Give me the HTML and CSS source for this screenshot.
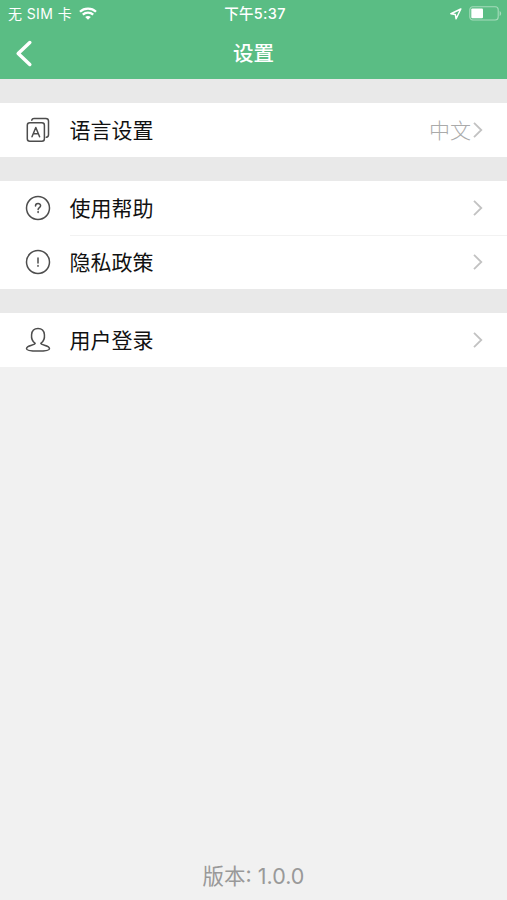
FILE: index.html
```html
<!DOCTYPE html>
<html lang="zh-CN">
<head>
    <meta charset="UTF-8">
    <meta name="viewport" content="width=device-width, initial-scale=1">
    <title>设置</title>
    <link rel="stylesheet" href="styles.css">
</head>
<body>
    <div class="page">
        <header class="header">
            <div class="status-bar">
                <div class="status-left">
                    <span class="carrier">无 SIM 卡</span>
                    <svg class="wifi" width="18" height="13" viewBox="0 0 18 13" fill="none" stroke="#fff" stroke-width="2.3">
                        <path d="M1 4.7C5.3.5 12.7.5 17 4.7"/>
                        <path d="M3.8 7.7c2.9-2.8 7.5-2.8 10.4 0"/>
                        <path d="M9 12.8 6.2 10c1.6-1.5 4-1.5 5.6 0z" fill="#fff" stroke="none"/>
                    </svg>
                </div>
                <span class="time">下午5:37</span>
                <div class="status-right">
                    <svg width="12" height="12" viewBox="0 0 12 12" fill="none" stroke="#fff" stroke-width="1.5" stroke-linejoin="round">
                        <path d="M10.8 1 .9 5.7l4.4.7.8 4.4z"/>
                    </svg>
                    <svg width="33" height="15" viewBox="0 0 33 15">
                        <rect x=".8" y=".8" width="28.4" height="13.2" rx="3" fill="none" stroke="#a5dcbb" stroke-width="1.1"/>
                        <rect x="2.3" y="2.5" width="11.7" height="9.8" rx="1" fill="#fff"/>
                        <path d="M30.6 5v5c2-.8 2-4.2 0-5z" fill="#a5dcbb"/>
                    </svg>
                </div>
            </div>
            <div class="nav-bar">
                <a class="back" href="#">
                    <svg width="18" height="28" viewBox="0 0 18 28" fill="none" stroke="#fff" stroke-width="3.5" stroke-linecap="round" stroke-linejoin="round">
                        <path d="M14.8 2.500 3.200 13.500l11.600 11"/>
                    </svg>
                </a>
                <h1 class="title">设置</h1>
            </div>
        </header>

        <main class="groups">
            <ul class="group">
                <li class="row">
                    <svg class="icon" viewBox="0 0 26 26">
                        <rect x="2.300" y="5.800" width="17.100" height="18.400" rx="2.500"/>
                        <path d="M6.800 3.200V3q.4-1.600 2.200-1.600h11.800q2.700 0 2.700 2.700v13.600q0 2.300-2.200 2.600"/>
                        <path d="m7 19.700 3.800-9.200 3.800 9.200M8.400 16.700h4.800"/>
                    </svg>
                    <div class="cell">
                        <span class="label">语言设置</span>
                        <span class="value">中文</span>
                        <svg class="arrow" viewBox="0 0 10 18"><path d="m1 1.800 7.300 7.200L1 16.200"/></svg>
                    </div>
                </li>
            </ul>
            <ul class="group">
                <li class="row">
                    <svg class="icon" viewBox="0 0 26 26">
                        <circle cx="13" cy="13" r="11.500"/>
                        <path d="M10.500 11c0-3.300 5.100-3.200 5.100-.2 0 1.800-2.500 1.800-2.500 3.600M13.100 16.400v1"/>
                    </svg>
                    <div class="cell">
                        <span class="label">使用帮助</span>
                        <svg class="arrow" viewBox="0 0 10 18"><path d="m1 1.800 7.300 7.200L1 16.200"/></svg>
                    </div>
                </li>
                <li class="row">
                    <svg class="icon" viewBox="0 0 26 26">
                        <circle cx="13" cy="13" r="11.500"/>
                        <path d="M13 9v5M13 16.400v.8"/>
                    </svg>
                    <div class="cell">
                        <span class="label">隐私政策</span>
                        <svg class="arrow" viewBox="0 0 10 18"><path d="m1 1.800 7.300 7.200L1 16.200"/></svg>
                    </div>
                </li>
            </ul>
            <ul class="group">
                <li class="row">
                    <svg class="icon" viewBox="0 0 26 26">
                        <path d="M10.200 16.300C5 13 4.800 1.600 13 1.600S21 13 15.800 16.300c.2 2.200 8.700 1.900 8.700 5.400 0 3.100-23 3.100-23 0 0-3.500 8.500-3.200 8.700-5.400z"/>
                    </svg>
                    <div class="cell">
                        <span class="label">用户登录</span>
                        <svg class="arrow" viewBox="0 0 10 18"><path d="m1 1.800 7.300 7.200L1 16.200"/></svg>
                    </div>
                </li>
            </ul>
        </main>

        <footer class="version">版本: 1.0.0</footer>
    </div>
</body>
</html>
```
FILE: styles.css
```css
* {
    box-sizing: border-box;
    margin: 0;
    padding: 0;
}

body {
    font-family: Inter, "Noto Sans CJK SC", sans-serif;
    background-color: #f1f1f1;
    color: #111;
}

.page {
    display: flex;
    flex-direction: column;
    height: 100vh;
}

.header {
    height: 79px;
    background-color: #5abd84;
    color: #fff;
}

.status-bar {
    display: grid;
    grid-template-columns: 1fr auto 1fr;
    align-items: center;
    height: 27px;
    padding: 0 5px 0 8px;
    font-size: 14px;
    line-height: 27px;
}

.status-left,
.status-right {
    display: flex;
    align-items: center;
    gap: 7px;
}

.status-right {
    justify-content: flex-end;
}

.carrier {
    letter-spacing: 0.4px;
}

.time {
    font-size: 14.5px;
    font-weight: 500;
    letter-spacing: 0.3px;
}

.nav-bar {
    display: grid;
    grid-template-columns: 1fr auto 1fr;
    align-items: center;
    height: 52px;
    padding: 0 15px;
}

.back {
    display: flex;
}

.title {
    font-size: 20.5px;
    font-weight: 500;
    line-height: 52px;
    padding-top: 1px;
}

.groups {
    display: flex;
    flex-direction: column;
    gap: 24px;
    padding-top: 24px;
    background-color: #e9e9e9;
}

.group {
    list-style: none;
    background-color: #fff;
}

.row {
    display: flex;
    align-items: center;
    height: 54px;
    padding-left: 25px;
}

.icon {
    width: 26px;
    height: 26px;
    margin-right: 18.5px;
    fill: none;
    stroke: #4d4d4d;
    stroke-width: 1.5;
    stroke-linecap: round;
    stroke-linejoin: round;
}

.cell {
    display: flex;
    align-items: center;
    flex: 1;
    height: 54px;
    padding-right: 24px;
    font-size: 21px;
    line-height: 54px;
}

.row + .row .cell {
    box-shadow: inset 0 1px #f2f2f2;
}

.label,
.value {
    padding-top: 2px;
}

.label {
    flex: 1;
}

.value {
    margin-right: 2px;
    color: #aaa;
    font-weight: 300;
}

.arrow {
    width: 10px;
    height: 18px;
    fill: none;
    stroke: #c2c2c2;
    stroke-width: 1.8;
}

.version {
    margin-top: auto;
    padding-bottom: 9px;
    color: #999;
    font-size: 21.5px;
    line-height: 30px;
    text-align: center;
}
```
